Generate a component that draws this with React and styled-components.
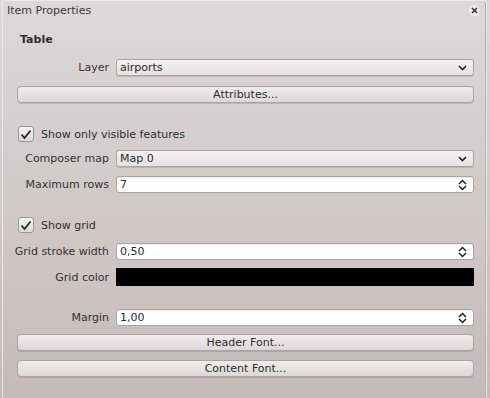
import React from "react";
import styled, { createGlobalStyle } from "styled-components";

const Global = createGlobalStyle`
  html, body {
    margin: 0;
    padding: 0;
    width: 490px;
    height: 398px;
    overflow: hidden;
    background: linear-gradient(180deg, #dcd9d6 0%, #d2ccc9 45%, #c4bbb8 100%);
    font-family: "DejaVu Sans", "Liberation Sans", sans-serif;
    font-size: 11px;
    color: #2e2e2e;
  }
`;

const Dock = styled.div`
  margin-left: 2px;
  width: 485px;
  height: 400px;
  border: 1px solid #ebe9e7;
  border-bottom: none;
  border-radius: 4px 4px 0 0;
  box-sizing: border-box;
  box-shadow: inset -1px 0 0 #b5aeab;
`;

const TitleBar = styled.div`
  height: 18px;
  display: flex;
  align-items: center;
  justify-content: space-between;
  padding: 0 6px 0 4px;
  color: #3a3a3a;
`;

const CloseBtn = styled.div`
  width: 11px;
  height: 11px;
  border-radius: 50%;
  display: flex;
  align-items: center;
  justify-content: center;
  background: #ece9e7;
`;

const Content = styled.div`
  padding: 0 12px 0 14px;
  display: flex;
  flex-direction: column;
`;

const Heading = styled.div`
  font-weight: bold;
  margin: 13px 0 0 3px;
  height: 15px;
  line-height: 15px;
`;

const Row = styled.div`
  display: grid;
  grid-template-columns: 92px 1fr;
  column-gap: 7px;
  align-items: center;
  margin-top: ${(p) => p.$top}px;
`;

const Label = styled.div`
  text-align: right;
  white-space: nowrap;
  color: #333;
  direction: rtl;
`;

const Field = styled.div`
  height: 17px;
  box-sizing: border-box;
  border: 1px solid #aaa5a2;
  border-radius: 3px;
  display: flex;
  align-items: center;
  justify-content: space-between;
  padding: 0 6px 0 3px;
  background: ${(p) =>
    p.$white ? "#ffffff" : "linear-gradient(180deg, #f3f2f1 0%, #e5e2e0 100%)"};
  box-shadow: ${(p) =>
    p.$white ? "inset 0 1px 1px rgba(0,0,0,0.08)" : "0 1px 0 rgba(0,0,0,0.12)"};
  color: #2a2a2a;
`;

const ColorSwatch = styled.div`
  height: 18px;
  background: #000;
`;

const Button = styled.div`
  height: 17px;
  box-sizing: border-box;
  margin-top: ${(p) => p.$top}px;
  border: 1px solid #a9a4a1;
  border-radius: 4px;
  background: linear-gradient(180deg, #efedeb 0%, #dcd8d5 100%);
  box-shadow: 0 1px 0 rgba(0,0,0,0.12);
  display: flex;
  align-items: center;
  justify-content: center;
  color: #2e2e2e;
`;

const CheckRow = styled.div`
  display: flex;
  align-items: center;
  gap: 7px;
  margin: ${(p) => p.$top}px 0 0 1px;
  height: 16px;
`;

const Box = styled.div`
  width: 14px;
  height: 14px;
  border: 1px solid #9c9794;
  border-radius: 3px;
  background: linear-gradient(180deg, #f4f3f2 0%, #dedad7 100%);
  display: flex;
  align-items: center;
  justify-content: center;
`;

const Chevron = () => (
  <svg width="9" height="6" viewBox="0 0 9 6">
    <path d="M1 1 L4.5 4.5 L8 1" fill="none" stroke="#222" strokeWidth="1.6" />
  </svg>
);

const Spin = () => (
  <svg width="9" height="12" viewBox="0 0 9 12">
    <path d="M1 5 L4.5 1.5 L8 5 M1 7 L4.5 10.5 L8 7" fill="none" stroke="#222" strokeWidth="1.5" />
  </svg>
);

const Check = () => (
  <svg width="12" height="11" viewBox="0 0 12 11">
    <path d="M1.5 5.5 L4.5 9 L10.5 1.5" fill="none" stroke="#2a2a2a" strokeWidth="1.8" />
  </svg>
);

const Combo = ({ value }) => (
  <Field>
    <span>{value}</span>
    <Chevron />
  </Field>
);

const SpinBox = ({ value }) => (
  <Field $white>
    <span>{value}</span>
    <Spin />
  </Field>
);

export default function App() {
  return (
    <>
      <Global />
      <Dock>
        <TitleBar>
          <span>Item Properties</span>
          <CloseBtn>
            <svg width="7" height="7" viewBox="0 0 7 7">
              <path d="M1 1 L6 6 M6 1 L1 6" stroke="#333" strokeWidth="1.5" />
            </svg>
          </CloseBtn>
        </TitleBar>
        <Content>
          <Heading>Table</Heading>
          <Row $top={12}>
            <Label>Layer</Label>
            <Combo value="airports" />
          </Row>
          <Button $top={10}>Attributes...</Button>

          <CheckRow $top={23}>
            <Box>
              <Check />
            </Box>
            <span>Show only visible features</span>
          </CheckRow>
          <Row $top={8}>
            <Label>Composer map</Label>
            <Combo value="Map 0" />
          </Row>
          <Row $top={9}>
            <Label>Maximum rows</Label>
            <SpinBox value="7" />
          </Row>

          <CheckRow $top={24}>
            <Box>
              <Check />
            </Box>
            <span>Show grid</span>
          </CheckRow>
          <Row $top={10}>
            <Label>Grid stroke width</Label>
            <SpinBox value="0,50" />
          </Row>
          <Row $top={8}>
            <Label>Grid color</Label>
            <ColorSwatch />
          </Row>

          <Row $top={23}>
            <Label>Margin</Label>
            <SpinBox value="1,00" />
          </Row>
          <Button $top={8}>Header Font...</Button>
          <Button $top={9}>Content Font...</Button>
        </Content>
      </Dock>
    </>
  );
}
